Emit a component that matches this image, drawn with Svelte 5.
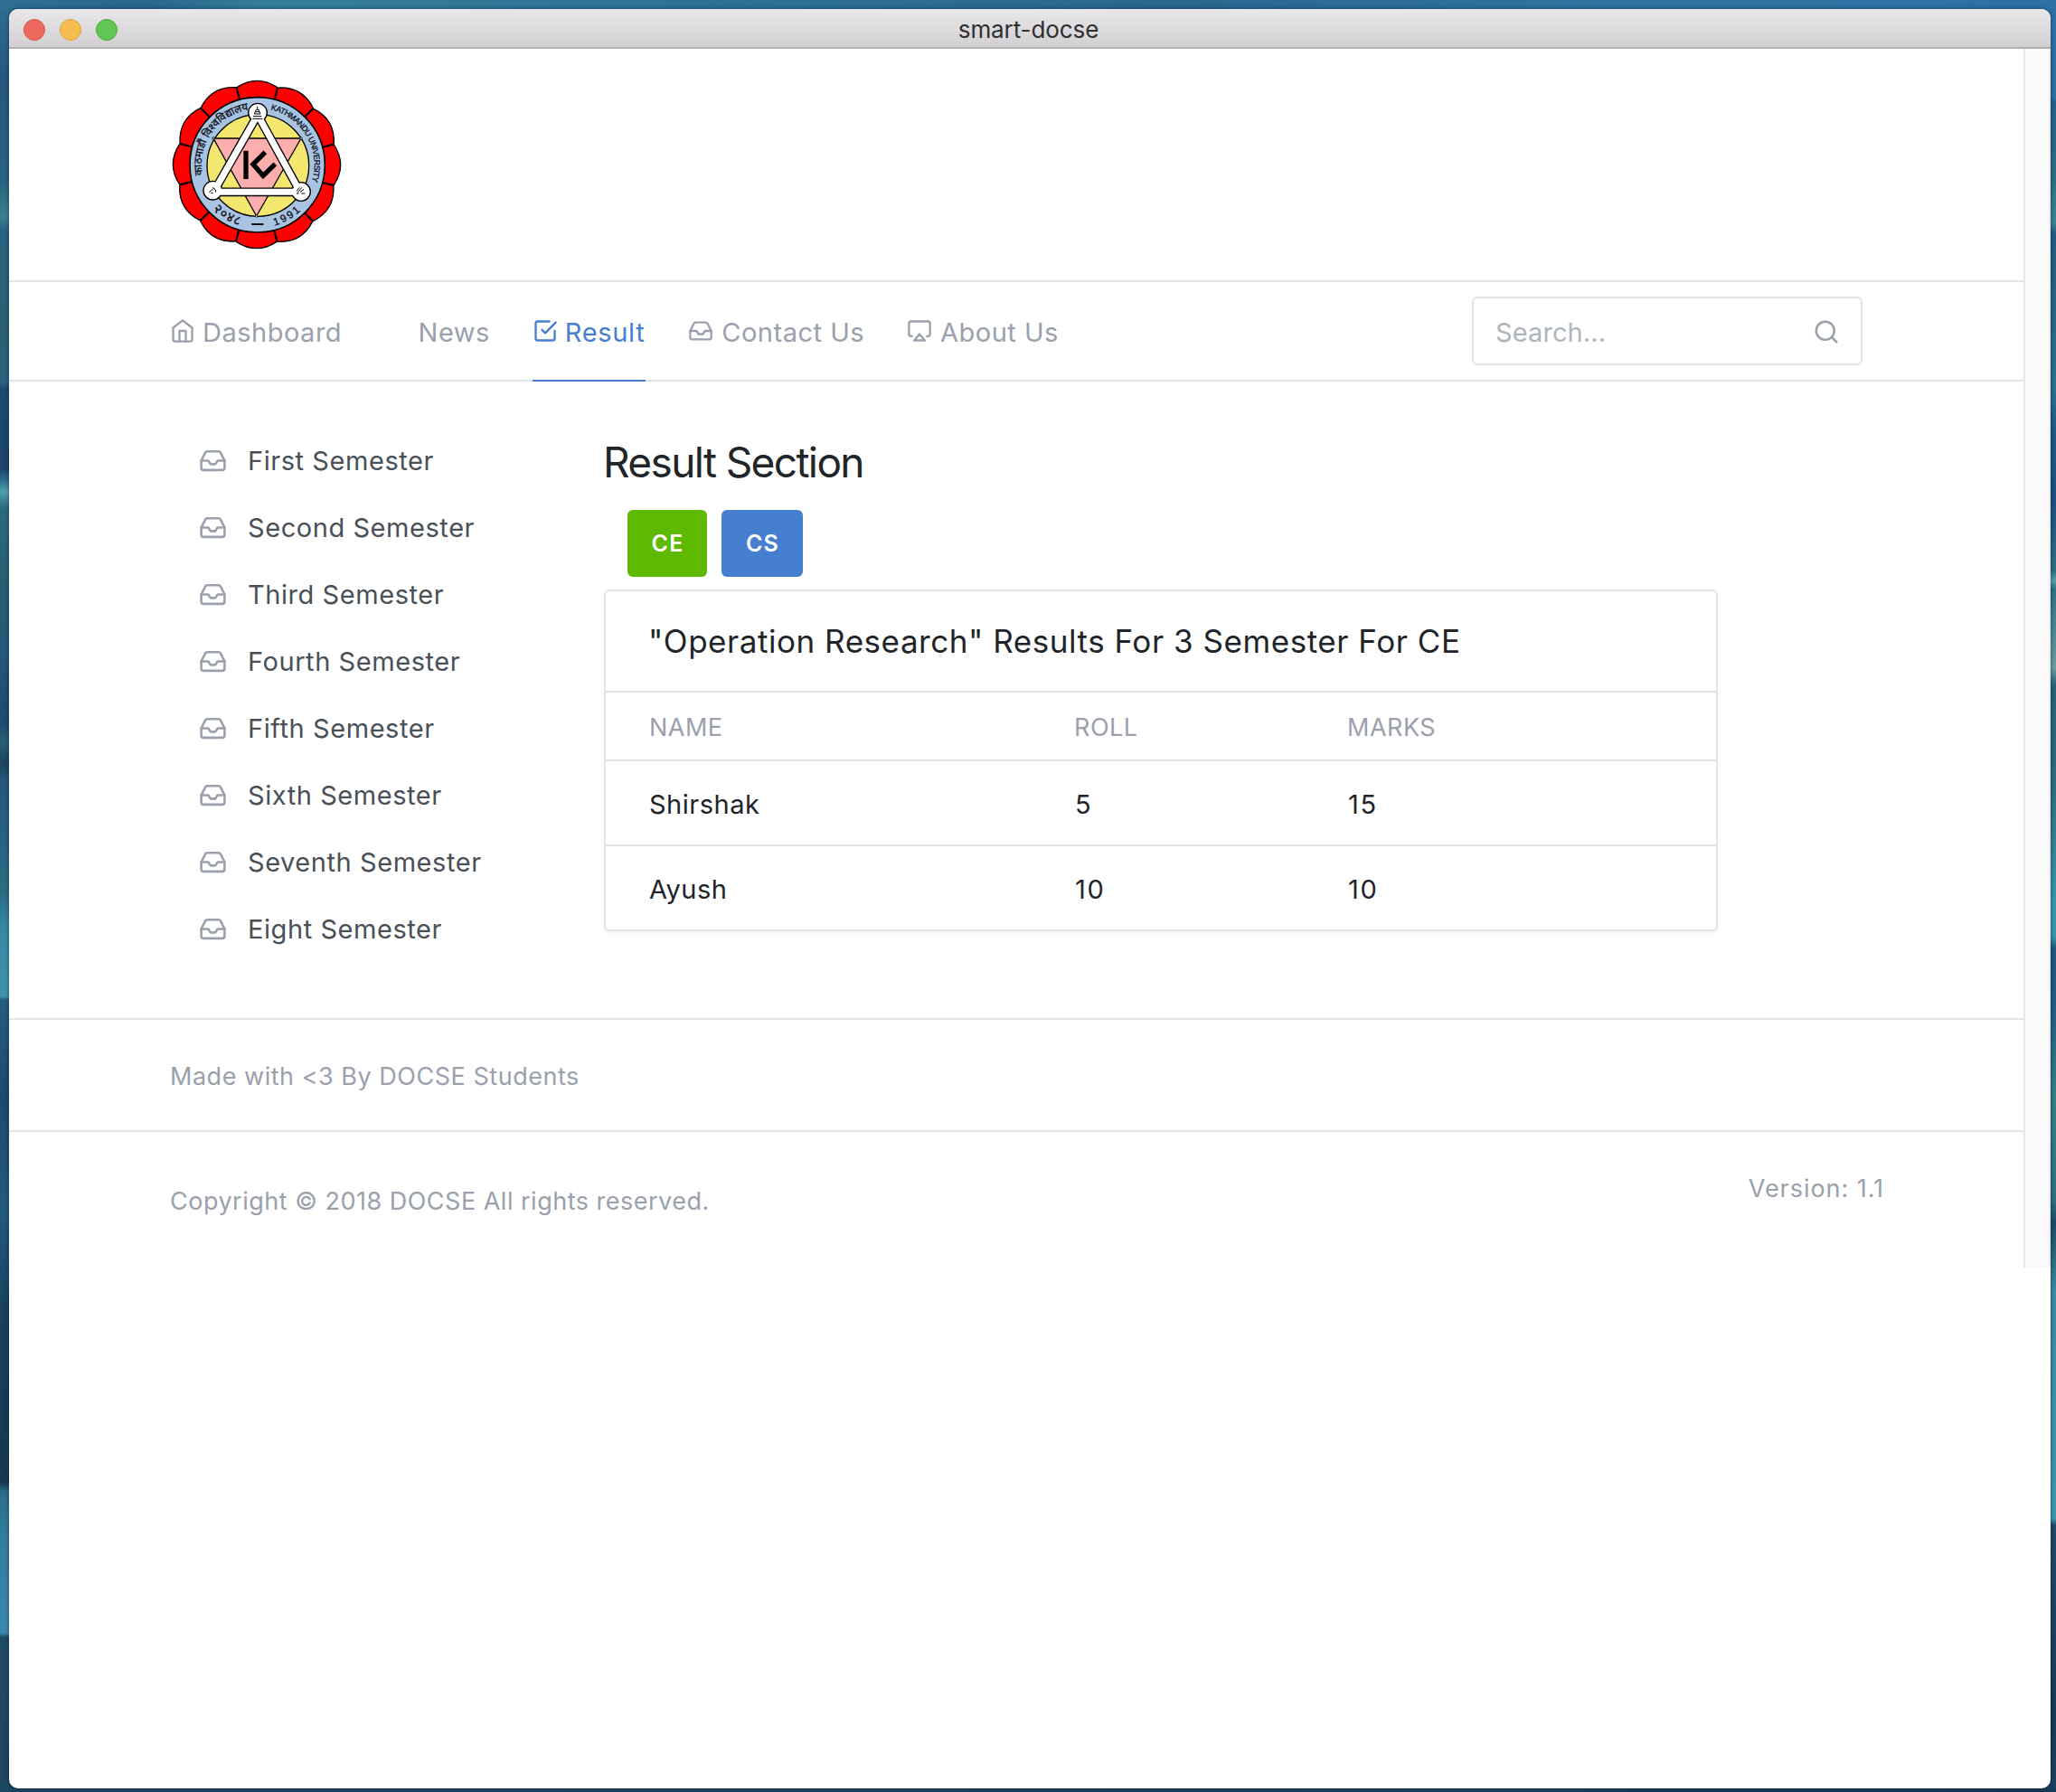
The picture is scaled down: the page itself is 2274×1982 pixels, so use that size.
<script>
  const semesters = ['First', 'Second', 'Third', 'Fourth', 'Fifth', 'Sixth', 'Seventh', 'Eight'];

  const nav = [
    { label: 'Dashboard', icon: 'home' },
    { label: 'News', icon: null },
    { label: 'Result', icon: 'check', active: true },
    { label: 'Contact Us', icon: 'inbox' },
    { label: 'About Us', icon: 'airplay' }
  ];

  const rows = [
    { name: 'Shirshak', roll: 5, marks: 15 },
    { name: 'Ayush', roll: 10, marks: 10 }
  ];

  // One petal of the crest, pointing up; it is rotated round the centre twelve times.
  const petalAngles = Array.from({ length: 12 }, (_, i) => i * 30);
</script>

{#snippet icon(name)}
  <svg class="icon" viewBox="0 0 24 24" aria-hidden="true">
    {#if name === 'home'}
      <path d="M3 9l9-7 9 7v11a2 2 0 0 1-2 2H5a2 2 0 0 1-2-2z" />
      <path d="M9 22V12h6v10" />
    {:else if name === 'check'}
      <path d="M9 11l3 3L22 4" />
      <path d="M21 12v7a2 2 0 0 1-2 2H5a2 2 0 0 1-2-2V5a2 2 0 0 1 2-2h11" />
    {:else if name === 'inbox'}
      <path d="M22 12h-6l-2 3h-4l-2-3H2" />
      <path d="M5.45 5.11L2 12v6a2 2 0 0 0 2 2h16a2 2 0 0 0 2-2v-6l-3.45-6.89A2 2 0 0 0 16.76 4H7.24a2 2 0 0 0-1.79 1.11z" />
    {:else if name === 'airplay'}
      <path d="M5 17H4a2 2 0 0 1-2-2V5a2 2 0 0 1 2-2h16a2 2 0 0 1 2 2v10a2 2 0 0 1-2 2h-1" />
      <path d="M12 15l5 6H7l5-6z" />
    {:else if name === 'search'}
      <circle cx="11" cy="11" r="8" />
      <path d="M21 21l-4.35-4.35" />
    {/if}
  </svg>
{/snippet}

<div class="desktop">
  <div class="window">
    <div class="titlebar">
      <div class="lights">
        <span class="light close"></span>
        <span class="light minimise"></span>
        <span class="light zoom"></span>
      </div>
      <div class="window-title">smart-docse</div>
    </div>

    <div class="viewport">
      <div class="page">
        <header class="header">
          <svg class="crest" viewBox="570 261 564 570" role="img" aria-label="Kathmandu University">
            <defs>
              <path id="arc-nepali" d="M672 581 A184 184 0 0 1 853 363" />
              <path id="arc-english" d="M898 364 A188 188 0 0 1 853 735" />
              <path id="arc-bottom" d="M643 547 A210 210 0 0 0 1063 547" />
            </defs>
            {#each petalAngles as a}
              <path
                class="petal"
                transform="rotate({a} 852 546)"
                d="M796 330 L786 290 Q853 246 920 290 L910 330 Z"
              />
            {/each}
            <circle class="ring" cx="854" cy="547" r="224" />
            <circle class="disc" cx="856" cy="549" r="169" />
            <path class="down" d="M708 459H999L851 717Z" />
            <path class="band-edge" d="M855 381L709 637H996Z" />
            <g class="nodes">
              <circle cx="855" cy="374" r="31" />
              <circle cx="706" cy="632" r="31" />
              <circle cx="999" cy="636" r="31" />
            </g>
            <path class="band" d="M855 381L709 637H996Z" />
            <g class="pins">
              <circle cx="708" cy="459" r="4" />
              <circle cx="999" cy="459" r="4" />
              <circle cx="851" cy="717" r="4" />
            </g>
            <path class="monogram" d="M816 500V594M880 505L840 545L873 583L913 544" />
            <path class="mark" d="M854 353V362M850 364H858M847 371H861M844 378H864M840 386H868M838 394H870M850 364L844 378M858 364L864 378" />
            <path class="mark" d="M694 638L708 626M706 622Q720 630 716 638M700 640H707" />
            <path class="mark" d="M984 634L994 622M988 638L1002 622M996 638L1008 628M1000 642H1012M984 642H992" />
            <text class="nepali" font-size="35.5"><textPath href="#arc-nepali">काठमाडौं विश्वविद्यालय</textPath></text>
            <text class="english" font-size="27" textLength="308"><textPath href="#arc-english">KATHMANDU UNIVERSITY</textPath></text>
            <text class="year digits" font-size="44"><textPath href="#arc-bottom" startOffset="166">२०४८</textPath></text>
            <text class="year latin" font-size="35" textLength="100"><textPath href="#arc-bottom" startOffset="389">1991</textPath></text>
            <path class="dash" d="M837 744H872" />
          </svg>
        </header>

        <nav class="nav">
          <ul class="links">
            {#each nav as item}
              <li class:active={item.active}>
                {@render icon(item.icon)}
                <span>{item.label}</span>
              </li>
            {/each}
          </ul>
          <div class="search">
            <span>Search...</span>
            {@render icon('search')}
          </div>
        </nav>

        <main class="main">
          <ul class="sidebar">
            {#each semesters as s}
              <li>{@render icon('inbox')}<span>{s} Semester</span></li>
            {/each}
          </ul>

          <section class="results">
            <h1>Result Section</h1>
            <div class="buttons">
              <button class="btn ce">CE</button>
              <button class="btn cs">CS</button>
            </div>
            <div class="card">
              <h3>"Operation Research" Results For 3 Semester For CE</h3>
              <div class="row head"><span>NAME</span><span>ROLL</span><span>MARKS</span></div>
              {#each rows as r}
                <div class="row">
                  <span>{r.name}</span>
                  <span class="number">{r.roll}</span>
                  <span class="number">{r.marks}</span>
                </div>
              {/each}
            </div>
          </section>
        </main>

        <div class="credits">Made with &lt;3 By DOCSE Students</div>
        <footer class="footer">
          <span class="copyright">Copyright © 2018 DOCSE All rights reserved.</span>
          <span class="version">Version: 1.1</span>
        </footer>
      </div>
      <div class="scrollbar"></div>
    </div>
  </div>
</div>

<style>
  :global(body) {
    margin: 0;
    overflow: hidden;
  }

  .desktop,
  .desktop * {
    box-sizing: border-box;
  }

  .desktop {
    width: 2274px;
    height: 1982px;
    padding: 10px 6px 4px 10px;
    font-family: Inter, 'Noto Sans', sans-serif;
    font-size: 29px;
    letter-spacing: 0.5px;
    color: #212529;
    background:
      linear-gradient(90deg, #2f6f93 0, #2a668c 160px, #357f9a 300px, #2f7396 700px, #2b678f 1300px, #2f74a0 1800px, #2e6fa5 100%) 0 0 / 100% 10px no-repeat,
      linear-gradient(90deg, #1c4560, #1b4263 60%, #173a58) 0 100% / 100% 4px no-repeat,
      linear-gradient(#2f6f93 0, #25567e 90px, #2a6382 200px, #39808f 240px, #2a6382 254px, #2a6070 366px, #2a6380 422px, #1d4a70 430px, #1c4468 518px, #2b6a8a 530px, #4fa0ad 544px, #2c6a80 562px, #275f72 640px, #245878 720px, #1e4a70 796px, #275f75 822px, #1c4560 844px, #24567a 860px, #2c6c85 986px, #3888a5 1024px, #3d93ae 1102px, #255d80 1106px, #1e4a6c 1213px, #225a7c 1340px, #18405f 1454px, #16384f 1640px, #2a6f88 1650px, #357ca0 1700px, #3a88ae 1806px, #1f4a66 1811px, #1c4560 100%) 0 0 / 50% 100% no-repeat,
      linear-gradient(#2e6fa5 0, #2e6fa0 108px, #25608a 114px, #2c6b85 190px, #3b8595 246px, #245a80 258px, #2c7090 430px, #1f5a85 474px, #1f4f80 556px, #2f6f85 632px, #5aa0a8 642px, #2f7085 652px, #6a9ca0 739px, #28607a 758px, #2d6a80 860px, #3a95aa 998px, #3a95aa 1036px, #22567e 1049px, #235b85 1112px, #357f85 1213px, #2f7080 1327px, #1c4a6a 1352px, #2c6a80 1390px, #3a8ba5 1428px, #3f95ac 1680px, #1f4a6a 1687px, #163a5a 1896px, #1c4060 100%) 100% 0 / 50% 100% no-repeat;
  }

  .window {
    height: 1968px;
    border-radius: 10px;
    overflow: hidden;
    background: #fff;
    box-shadow: 0 0 4px rgba(0, 15, 35, 0.55);
  }

  .titlebar {
    display: grid;
    grid-template-columns: 120px 1fr 120px;
    align-items: center;
    height: 44px;
    background: linear-gradient(#e9e7ea, #d1cfd2);
    border-bottom: 2px solid #b2b0b3;
  }

  .lights {
    display: flex;
    gap: 16px;
    padding: 2px 0 0 16px;
  }

  .light {
    width: 24px;
    height: 24px;
    border-radius: 50%;
    border: 1px solid;
  }

  .close {
    background: #ee6a5f;
    border-color: #d5554c;
  }

  .minimise {
    background: #f6be50;
    border-color: #d9a13d;
  }

  .zoom {
    background: #62c655;
    border-color: #4fa73e;
  }

  .window-title {
    padding: 3px 3px 0 0;
    text-align: center;
    font-size: 26px;
    line-height: 40px;
    letter-spacing: -0.1px;
    color: #2f2f30;
  }

  .viewport {
    display: flex;
    height: 1348px;
  }

  .page {
    flex: 1;
    display: flex;
    flex-direction: column;
  }

  .scrollbar {
    width: 30px;
    background: #fafafa;
    border: solid #e7e7e7;
    border-width: 0 2px;
    border-right-color: #ededed;
  }

  .header {
    height: 258px;
    padding: 33px 0 0 180px;
    border-bottom: 2px solid #e0e5ec;
  }

  .crest {
    display: block;
    width: 188px;
    height: 190px;
    stroke-linejoin: round;
  }

  .petal {
    fill: #fe0000;
    stroke: #000;
    stroke-width: 4;
  }

  .ring {
    fill: #a8c4e2;
    stroke: #000;
    stroke-width: 5;
  }

  .disc {
    fill: #f3e770;
    stroke: #000;
    stroke-width: 4;
  }

  .down {
    fill: #ffaeae;
    stroke: #000;
    stroke-width: 4;
  }

  .band-edge,
  .band {
    fill: none;
    stroke: #000;
    stroke-width: 29;
  }

  .band {
    stroke: #fff;
    stroke-width: 21;
  }

  .nodes {
    fill: #fff;
    stroke: #000;
    stroke-width: 4;
  }

  .pins {
    fill: #a8c4e2;
    stroke: #000;
    stroke-width: 2;
  }

  .monogram {
    fill: none;
    stroke: #000;
    stroke-width: 16;
    stroke-linejoin: miter;
  }

  .mark {
    fill: none;
    stroke: #000;
    stroke-width: 3;
  }

  .dash {
    stroke: #111;
    stroke-width: 6;
    stroke-linecap: round;
  }

  .nepali,
  .english,
  .year {
    fill: #0a0a14;
    stroke: #0a0a14;
    stroke-width: 0.8;
    letter-spacing: 0;
  }

  .digits {
    letter-spacing: 4px;
  }

  .english,
  .latin {
    font-family: 'Liberation Sans', sans-serif;
  }

  .nav {
    display: flex;
    align-items: center;
    justify-content: space-between;
    height: 110px;
    padding: 0 178px;
    border-bottom: 2px solid #e0e5ec;
  }

  .icon {
    flex: none;
    width: 28px;
    height: 28px;
    fill: none;
    stroke: currentColor;
    stroke-width: 2;
    stroke-linecap: round;
    stroke-linejoin: round;
  }

  .links {
    display: flex;
    gap: 47px;
    height: 110px;
    margin: 2px 0 0;
    padding: 0;
    list-style: none;
    color: #9aa0ac;
  }

  .links li {
    display: flex;
    align-items: center;
    gap: 8px;
    border-bottom: 2px solid transparent;
  }

  .links li:nth-child(2) {
    gap: 9.5px;
  }

  .links li:nth-child(n + 4) {
    gap: 9px;
  }

  .links span {
    padding-top: 3px;
  }

  .links .active {
    padding-right: 1px;
    letter-spacing: 0.65px;
    color: #467fcf;
    border-bottom-color: #467fcf;
  }

  .search {
    display: flex;
    align-items: center;
    justify-content: space-between;
    width: 432px;
    height: 76px;
    padding: 2px 23px 0 24px;
    border: 2px solid #e0e5ec;
    border-radius: 6px;
    letter-spacing: 0.1px;
    color: #adb5bd;
  }

  .search .icon {
    width: 30px;
    height: 30px;
    color: #9aa0ac;
  }

  .main {
    display: flex;
    height: 704px;
    padding-left: 210px;
  }

  .sidebar {
    width: 448px;
    margin: 0;
    padding: 50px 0 0;
    list-style: none;
    letter-spacing: 0.56px;
    color: #495057;
  }

  .sidebar li {
    display: flex;
    align-items: center;
    gap: 23px;
    height: 74px;
  }

  .sidebar .icon {
    width: 31px;
    height: 31px;
    color: #9aa0ac;
  }

  .results {
    width: 1232px;
    padding-top: 59px;
  }

  h1 {
    margin: 0 0 0 -1px;
    font-size: 46px;
    font-weight: 400;
    line-height: 60px;
    letter-spacing: -1.62px;
  }

  .buttons {
    display: flex;
    gap: 16px;
    margin: 23px 0 14px;
    padding-left: 26px;
  }

  .btn {
    width: 88px;
    height: 74px;
    padding: 0 0 1px 1px;
    border: 0;
    border-radius: 6px;
    font-family: inherit;
    font-size: 25px;
    font-weight: 600;
    letter-spacing: 1.2px;
    color: #fff;
  }

  .ce {
    background: #5eba00;
  }

  .cs {
    width: 90px;
    background: #467fcf;
  }

  .card {
    border: 2px solid #e0e5ec;
    border-radius: 6px;
    box-shadow: 0 2px 4px rgba(0, 0, 0, 0.05);
  }

  h3 {
    margin: 0;
    padding-left: 47px;
    font-size: 35px;
    font-weight: 400;
    line-height: 110px;
    letter-spacing: 0.54px;
  }

  .row {
    display: grid;
    grid-template-columns: 470px 302px 1fr;
    height: 94px;
    padding: 3px 0 0 48px;
    line-height: 90px;
    border-top: 2px solid #dee2e6;
  }

  .number {
    padding-left: 1px;
    letter-spacing: 1.8px;
  }

  .row.head {
    height: 76px;
    padding-top: 2px;
    line-height: 74px;
    font-size: 27px;
    color: #9aa0ac;
  }

  .credits {
    height: 124px;
    padding: 3px 0 0 178px;
    line-height: 120px;
    font-size: 27px;
    letter-spacing: 0.52px;
    color: #9aa0ac;
    border-top: 2px solid #e0e5ec;
  }

  .footer {
    flex: 1;
    display: flex;
    justify-content: space-between;
    align-items: flex-start;
    padding: 43px 154px 0 178px;
    line-height: 40px;
    font-size: 27px;
    color: #9aa0ac;
    border-top: 2px solid #e0e5ec;
  }

  .copyright {
    margin-top: 14px;
  }

  .version {
    letter-spacing: 0.95px;
  }
</style>
